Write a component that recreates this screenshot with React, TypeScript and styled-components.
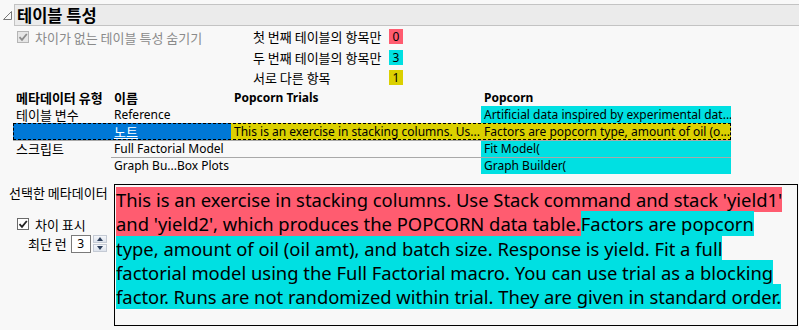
import React from "react";
import styled, { createGlobalStyle } from "styled-components";

const LATIN = `"Noto Sans", "Noto Sans CJK KR", sans-serif`;
const KO = `"Noto Sans CJK KR", "Noto Sans", sans-serif`;
const RED = "#ff5c70";
const CYAN = "#00e0e2";
const YELLOW = "#dbd000";
const BLUE = "#0078d7";

const Global = createGlobalStyle`
  html, body { margin: 0; padding: 0; background: #f8f8f8; }
  body { font-family: ${KO}; font-size: 13px; color: #000; }
  * { box-sizing: border-box; }
`;

const Page = styled.div`
  width: 799px;
  height: 330px;
  overflow: hidden;
  padding: 4px 0 0 3px;
  display: flex;
  flex-direction: column;
`;

const TitleRow = styled.div`
  display: flex;
  align-items: center;
  gap: 2px;
`;

const Disclosure = styled.svg`
  width: 9px;
  height: 9px;
  flex: none;
`;

const TitleBar = styled.div`
  flex: 1;
  height: 22px;
  background: #ebebeb;
  border: 1px solid #c3c3c3;
  border-right: none;
  display: flex;
  align-items: center;
  padding-left: 2px;
  font-weight: 700;
  font-size: 16.5px;
`;

const Body = styled.div`
  padding-left: 10px;
  display: flex;
  flex-direction: column;
`;

const TopRow = styled.div`
  display: flex;
  padding-top: 2px;
  padding-left: 4px;
`;

const CheckLine = styled.label<{ $muted?: boolean }>`
  display: flex;
  align-items: center;
  gap: 6px;
  height: 16px;
  margin-top: 1px;
  color: ${(p) => (p.$muted ? "#8a8a8a" : "#000")};
  width: 236px;
`;

const Box = styled.span<{ $muted?: boolean }>`
  width: 12px;
  height: 12px;
  border: 1px solid ${(p) => (p.$muted ? "#b5b5b5" : "#6a6a6a")};
  background: ${(p) => (p.$muted ? "#e6e6e6" : "#fff")};
  display: inline-flex;
  align-items: center;
  justify-content: center;
  flex: none;
`;

const Legend = styled.div`
  display: grid;
  grid-template-columns: 136px 14px;
  grid-auto-rows: 15px;
  row-gap: 5.5px;
  align-items: center;
  padding-top: 1px;
`;

const LegendLabel = styled.span`
  white-space: nowrap;
  line-height: 15px;
`;

const Swatch = styled.span<{ $bg: string }>`
  display: inline-flex;
  justify-content: center;
  align-items: center;
  width: 14px;
  height: 15px;
  background: ${(p) => p.$bg};
  font-family: ${LATIN};
  font-size: 12px;
`;

const Table = styled.div`
  margin-top: 4px;
  display: grid;
  grid-template-columns: 98px 120px 250px 250px;
  width: 718px;
`;

const Cell = styled.div<{
  $bg?: string;
  $bold?: boolean;
  $ko?: boolean;
  $lineTop?: boolean;
}>`
  height: 17px;
  line-height: 16px;
  padding-left: 3px;
  white-space: nowrap;
  overflow: hidden;
  font-family: ${(p) => (p.$ko ? KO : LATIN)};
  font-size: ${(p) => (p.$ko ? "13px" : "12px")};
  font-weight: ${(p) => (p.$bold ? 700 : 400)};
  background: ${(p) => p.$bg || "transparent"};
  border-top: 1px solid ${(p) => (p.$lineTop ? "#a8a8a8" : "transparent")};
`;

const SelRow = styled.div`
  grid-column: 1 / -1;
  display: grid;
  grid-template-columns: 98px 120px 250px 250px;
  outline: 1px dashed #000;
  outline-offset: -1px;
  height: 17px;
`;

const SelCell = styled.div<{ $bg: string; $white?: boolean; $ko?: boolean }>`
  background: ${(p) => p.$bg};
  color: ${(p) => (p.$white ? "#fff" : "#000")};
  font-family: ${(p) => (p.$ko ? KO : LATIN)};
  font-size: ${(p) => (p.$ko ? "13px" : "12px")};
  line-height: 17px;
  padding-left: 3px;
  white-space: nowrap;
  overflow: hidden;
`;

const Link = styled.span`
  text-decoration: underline;
`;

const Bottom = styled.div`
  display: flex;
  margin-top: 10px;
`;

const Side = styled.div`
  width: 105px;
  flex: none;
  display: flex;
  flex-direction: column;
  margin-left: -4px;
`;

const SideLabel = styled.div`
  margin-top: 1px;
  height: 16px;
  line-height: 16px;
  white-space: nowrap;
`;

const SideCheck = styled.label`
  display: flex;
  align-items: center;
  gap: 6px;
  margin-top: 15px;
  margin-left: 8px;
  height: 16px;
`;

const SpinRow = styled.div`
  display: flex;
  align-items: center;
  margin-top: 2px;
  margin-left: 19px;
  gap: 4px;
`;

const SpinBox = styled.div`
  width: 20px;
  height: 18px;
  border: 1px solid #7a7a7a;
  background: #fff;
  display: flex;
  align-items: center;
  justify-content: center;
  font-family: ${LATIN};
  font-size: 12px;
`;

const Spinner = styled.div`
  display: flex;
  flex-direction: column;
  gap: 1px;
  margin-left: -2px;
`;

const SpinBtn = styled.div`
  width: 14px;
  height: 8px;
  background: linear-gradient(#f4f6fa, #dde3ec);
  border: 1px solid #c4cad4;
  display: flex;
  align-items: center;
  justify-content: center;
`;

const NoteBox = styled.div`
  width: 684px;
  height: 142px;
  border: 1px solid #000;
  padding: 3px 1px 2px;
  font-family: ${LATIN};
  font-size: 18.4px;
  line-height: 24.3px;
`;

const Hl = styled.span<{ $bg: string }>`
  background: ${(p) => p.$bg};
`;

const Check = ({ muted }: { muted?: boolean }) => (
  <Box $muted={muted}>
    <svg width="10" height="10" viewBox="0 0 10 10">
      <path
        d="M1.5 5.2 L4 7.8 L8.8 2"
        fill="none"
        stroke={muted ? "#8c8c8c" : "#222"}
        strokeWidth="1.8"
      />
    </svg>
  </Box>
);

export default function App() {
  return (
    <Page>
      <Global />
      <TitleRow>
        <Disclosure viewBox="0 0 9 9">
          <path d="M8.5 0.5 L8.5 8.5 L0.5 8.5 Z" fill="none" stroke="#777" strokeWidth="1" />
        </Disclosure>
        <TitleBar>테이블 특성</TitleBar>
      </TitleRow>
      <Body>
        <TopRow>
          <CheckLine $muted>
            <Check muted />
            차이가 없는 테이블 특성 숨기기
          </CheckLine>
          <Legend>
            <LegendLabel>첫 번째 테이블의 항목만</LegendLabel>
            <Swatch $bg={RED}>0</Swatch>
            <LegendLabel>두 번째 테이블의 항목만</LegendLabel>
            <Swatch $bg={CYAN}>3</Swatch>
            <LegendLabel>서로 다른 항목</LegendLabel>
            <Swatch $bg={YELLOW}>1</Swatch>
          </Legend>
        </TopRow>
        <Table>
          <Cell $bold $ko>메타데이터 유형</Cell>
          <Cell $bold $ko>이름</Cell>
          <Cell $bold>Popcorn Trials</Cell>
          <Cell $bold>Popcorn</Cell>

          <Cell $ko>테이블 변수</Cell>
          <Cell>Reference</Cell>
          <Cell />
          <Cell $bg={CYAN}>Artificial data inspired by experimental dat...</Cell>

          <SelRow>
            <SelCell $bg={BLUE} />
            <SelCell $bg={BLUE} $white $ko>
              <Link>노트</Link>
            </SelCell>
            <SelCell $bg={YELLOW}>This is an exercise in stacking columns. Us...</SelCell>
            <SelCell $bg={YELLOW}>Factors are popcorn type, amount of oil (o...</SelCell>
          </SelRow>

          <Cell $lineTop $ko>스크립트</Cell>
          <Cell $lineTop>Full Factorial Model</Cell>
          <Cell $lineTop />
          <Cell $lineTop $bg={CYAN}>Fit Model(</Cell>

          <Cell />
          <Cell $lineTop>Graph Bu...Box Plots</Cell>
          <Cell $lineTop />
          <Cell $lineTop $bg={CYAN}>Graph Builder(</Cell>
        </Table>
        <Bottom>
          <Side>
            <SideLabel>선택한 메타데이터</SideLabel>
            <SideCheck>
              <Check />
              차이 표시
            </SideCheck>
            <SpinRow>
              최단 런
              <SpinBox>3</SpinBox>
              <Spinner>
                <SpinBtn>
                  <svg width="6" height="4" viewBox="0 0 6 4">
                    <path d="M0 4 L3 0 L6 4 Z" fill="#2c3e5a" />
                  </svg>
                </SpinBtn>
                <SpinBtn>
                  <svg width="6" height="4" viewBox="0 0 6 4">
                    <path d="M0 0 L3 4 L6 0 Z" fill="#2c3e5a" />
                  </svg>
                </SpinBtn>
              </Spinner>
            </SpinRow>
          </Side>
          <NoteBox>
            <Hl $bg={RED}>
              This is an exercise in stacking columns. Use Stack command and stack 'yield1'
              and 'yield2', which produces the POPCORN data table.
            </Hl>
            <Hl $bg={CYAN}>
              Factors are popcorn type, amount of oil (oil amt), and batch size. Response is
              yield. Fit a full factorial model using the Full Factorial macro. You can use trial
              as a blocking factor. Runs are not randomized within trial. They are given in
              standard order.
            </Hl>
          </NoteBox>
        </Bottom>
      </Body>
    </Page>
  );
}
